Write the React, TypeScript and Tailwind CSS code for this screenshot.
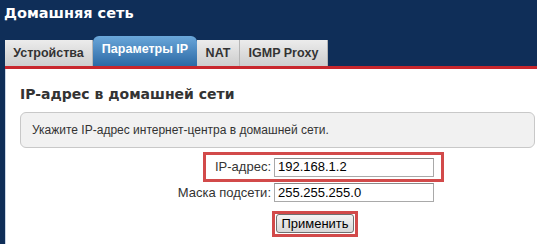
export default function App() {
  const tabs = ["Устройства", "Параметры IP", "NAT", "IGMP Proxy"];
  const active = 1;

  return (
    <div className="h-[244px] w-[537px] overflow-hidden bg-[#0f2e58] font-['Liberation_Sans',Arial,sans-serif]">
      <div className="h-[36px] pl-[4px] pt-[3px] font-['DejaVu_Sans',Verdana,sans-serif] text-[14.5px] font-bold text-white">
        Домашняя сеть
      </div>

      <div className="flex h-[30px] items-end pl-[5px]">
        {tabs.map((t, i) =>
          i === active ? (
            <div
              key={t}
              className="flex h-[30px] w-[104px] items-center justify-center rounded-t-[6px] bg-gradient-to-b from-[#6aa7da] to-[#2c6aa5] pb-[4px] text-[12.5px] font-bold text-white"
            >
              {t}
            </div>
          ) : (
            <div
              key={t}
              className={`flex h-[26px] items-center justify-center border-r border-[#b5b5b5] bg-gradient-to-b from-[#ececec] to-[#cdcdcd] text-[12.5px] font-bold text-[#333] ${
                i === 2 ? "w-[43px]" : "w-[88px]"
              }`}
            >
              {t}
            </div>
          )
        )}
      </div>

      <div className="ml-[5px] h-[3px] bg-[#c8262c]" />

      <div className="ml-[5px] h-[200px] border-l border-[#c9d6e6] bg-white">
        <h2 className="pl-[14px] pt-[16px] font-['DejaVu_Sans',Verdana,sans-serif] text-[14px] font-bold leading-[18px] text-[#333]">
          IP-адрес в домашней сети
        </h2>

        <div className="ml-[14px] mr-[2px] mt-[9px] flex h-[36px] items-center rounded-[6px] border border-[#c8c8c8] bg-[#f1f1f1] pl-[11px] text-[12px] text-[#333]">
          Укажите IP-адрес интернет-центра в домашней сети.
        </div>

        <div className="ml-[197px] mt-[4px] flex h-[30px] w-[241px] items-center justify-end gap-[3px] border-[3px] border-[#d24a4a] pr-[7px] text-[13px] text-[#333]">
          <span className="whitespace-nowrap">IP-адрес:</span>
          <input
            defaultValue="192.168.1.2"
            className="h-[19px] w-[160px] border border-[#a9a9a9] border-t-[#8a8a8a] px-[3px] text-[13px] text-black outline-none"
          />
        </div>

        <div className="ml-[94px] mt-[1px] flex w-[334px] items-center justify-end gap-[3px] text-[13px] text-[#333]">
          <span className="whitespace-nowrap">Маска подсети:</span>
          <input
            defaultValue="255.255.255.0"
            className="h-[19px] w-[160px] border border-[#a9a9a9] border-t-[#8a8a8a] px-[3px] text-[13px] text-black outline-none"
          />
        </div>

        <div className="ml-[266px] mt-[8px] flex h-[26px] w-[86px] items-center justify-center border-[3px] border-[#d24a4a]">
          <button className="h-[19px] w-[78px] rounded-[3px] border border-[#707070] bg-gradient-to-b from-[#f4f4f4] to-[#d8d8d8] text-[13px] leading-[15px] text-black">
            Применить
          </button>
        </div>
      </div>
    </div>
  );
}
